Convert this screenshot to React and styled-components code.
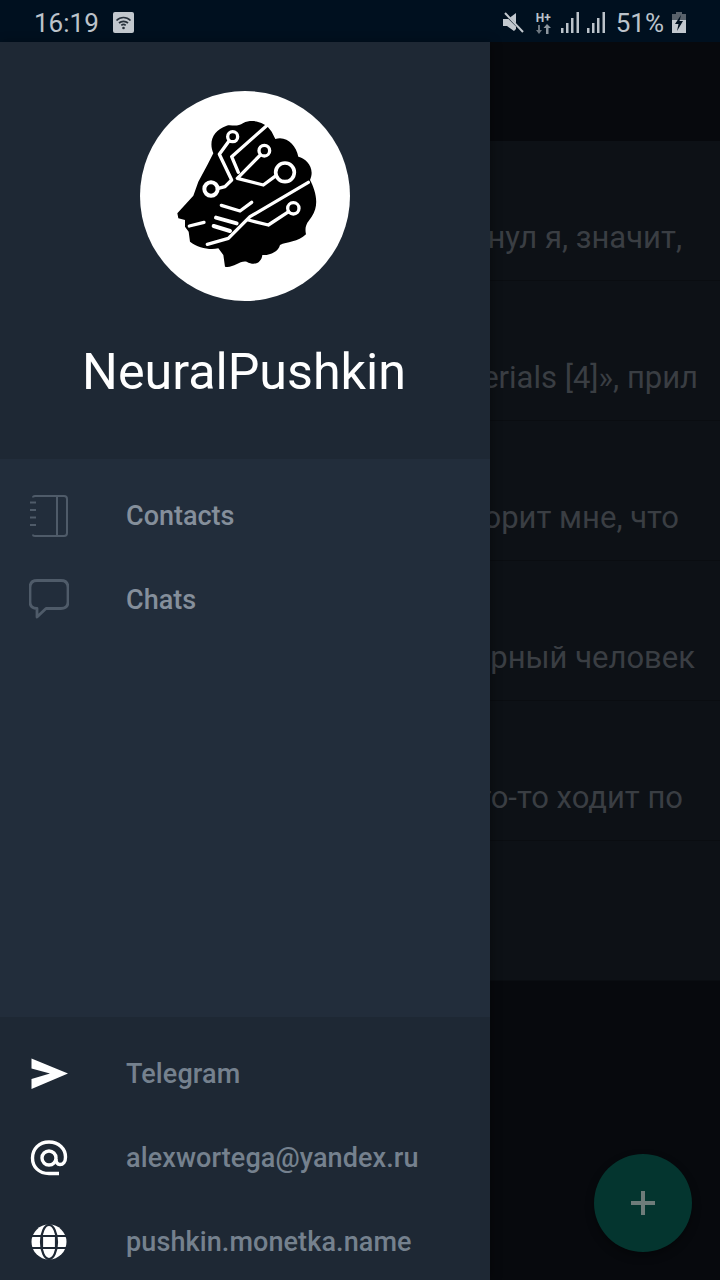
import React from "react"
import styled, { createGlobalStyle } from "styled-components"

const Global = createGlobalStyle`
  html, body {
    margin: 0;
    padding: 0;
    background: #07090d;
  }
  * {
    box-sizing: border-box;
  }
`

const Screen = styled.div`
  position: relative;
  width: 720px;
  height: 1280px;
  overflow: hidden;
  display: flex;
  flex-direction: column;
  background: #07090d;
  font-family: Roboto, "Noto Sans", sans-serif;
`

const StatusBar = styled.div`
  height: 42px;
  flex: none;
  display: flex;
  align-items: center;
  padding: 3px 34px 0 34px;
  background: #00101f;
  color: #bcc3ca;
  font-size: 26px;
  line-height: 36px;
`

const StatusRight = styled.div`
  margin-left: auto;
  display: flex;
  align-items: center;
`

const StatusIcon = styled.svg`
  display: block;
  flex: none;
  margin-left: ${(p) => p.$gap || 0}px;
`

const Network = styled.div`
  width: 15px;
  margin-left: 12px;
  display: flex;
  flex-direction: column;
  align-items: center;
`

const NetworkLabel = styled.span`
  font-size: 12px;
  line-height: 12px;
  font-weight: 700;
  color: #bcc3ca;
`

const Percent = styled.span`
  margin-left: 11px;
`

const Content = styled.div`
  flex: 1;
  display: flex;
  flex-direction: column;
`

const AppBar = styled.div`
  height: 99px;
  flex: none;
`

const Row = styled.div`
  height: 140px;
  flex: none;
  display: flex;
  align-items: flex-end;
  justify-content: flex-end;
  padding: 0 ${(p) => p.$right}px 22px 0;
  overflow: hidden;
  background: #0d1116;
  border-bottom: 1px solid #0a0d11;
  color: #3a3e43;
  font-size: 31px;
  line-height: 40px;
  white-space: nowrap;
`

const Fab = styled.div`
  position: absolute;
  left: 594px;
  top: 1154px;
  width: 98px;
  height: 98px;
  border-radius: 50%;
  display: flex;
  align-items: center;
  justify-content: center;
  background: #04352f;
  box-shadow: 0 4px 8px rgba(0, 0, 0, 0.35);
`

const Drawer = styled.aside`
  position: absolute;
  left: 0;
  top: 42px;
  bottom: 0;
  width: 490px;
  display: flex;
  flex-direction: column;
  background: #222d3b;
  box-shadow: 2px 0 10px rgba(0, 0, 0, 0.3);
`

const Profile = styled.header`
  height: 417px;
  flex: none;
  display: flex;
  flex-direction: column;
  align-items: center;
  padding-top: 49px;
  background: #1e2834;
`

const Avatar = styled.div`
  width: 210px;
  height: 210px;
  border-radius: 50%;
  background: #fff;
  overflow: hidden;
`

const Name = styled.h1`
  margin: 41px 2px 0 0;
  color: #fff;
  font-size: 50.2px;
  line-height: 60px;
  font-weight: 400;
`

const Nav = styled.nav`
  flex: 1;
  padding-top: 15px;
`

const Footer = styled.footer`
  height: 263px;
  flex: none;
  padding-top: 15px;
  overflow: hidden;
  background: #1e2834;
`

const Item = styled.div`
  height: 84px;
  display: flex;
  align-items: center;
  padding-left: 29px;
  color: ${(p) => (p.$muted ? "#75818e" : "#858f9b")};
  font-size: 27px;
  font-weight: 500;
  letter-spacing: ${(p) => (p.$muted ? "0.1px" : "0")};
`

const ItemIcon = styled.div`
  width: 97px;
  flex: none;
`

const Logo = () => (
  <svg viewBox="30 18 630 630" width="210" height="210">
    <path
      fill="#000"
      d="M142 385 L190 332 L205 290 L232 240 L250 205 C235 170 250 135 290 122 C305 118 320 128 340 114 C365 102 405 108 425 140 L436 162 C470 152 498 180 505 215 C530 220 556 250 540 285 C556 315 570 360 545 395 C535 410 522 420 528 448 C505 472 470 470 450 480 C445 500 420 512 397 510 C395 532 375 544 350 530 C330 525 310 550 285 545 L280 510 L265 490 C240 495 205 490 180 470 L176 440 L165 425 L165 405 L145 400 Z"
    />
    <g fill="none" stroke="#fff" strokeWidth="10" strokeLinecap="round" strokeLinejoin="round">
      <circle cx="308" cy="155" r="15" />
      <path d="M297 168 L268 208 L305 285 L285 305 L262 311" />
      <circle cx="243" cy="312" r="20" strokeWidth="12" />
      <path d="M410 122 L305 215 L325 262" />
      <circle cx="403" cy="197" r="16" />
      <path d="M391 210 L322 280 L400 300 L438 272" />
      <circle cx="465" cy="262" r="28" strokeWidth="11" />
      <path d="M535 292 L360 395 L295 460 L232 478" />
      <path d="M355 405 L415 420 L476 380" />
      <circle cx="490" cy="370" r="17" />
      <path d="M274 361 L330 378 L365 352" />
      <path d="M258 398 L320 415" strokeWidth="12" />
      <path d="M251 423 L300 438" strokeWidth="12" />
      <path d="M178 423 L222 412" />
    </g>
  </svg>
)

const ContactsIcon = () => (
  <svg width="40" height="44" viewBox="0 0 40 44" fill="none" stroke="#4f5b69" strokeWidth="2" style={{ display: "block" }}>
    <path d="M4 3.5 Q4 2 6 2 H35 Q38 2 38 5 V39 Q38 42 35 42 H6 Q4 42 4 40.5" />
    <path d="M28 2 V42" />
    <path d="M1 8.5 H7 M1 16 H7 M1 23.5 H7 M1 31 H7" />
  </svg>
)

const ChatIcon = () => (
  <svg width="40" height="42" viewBox="0 0 40 42" fill="none" stroke="#4f5b69" strokeWidth="2.8" style={{ display: "block" }}>
    <path strokeLinejoin="round" d="M8 1.5 H32 Q39 1.5 39 8.5 V23 Q39 29.5 32 29.5 H17 L8 38 L8 29.5 Q1 29.5 1 23 V8.5 Q1 1.5 8 1.5 Z" />
  </svg>
)

const SendIcon = () => (
  <svg width="40" height="32" viewBox="0 0 40 32" style={{ display: "block" }}>
    <path fill="#fff" d="M2.5 0.5 L39 15.5 L2.5 31 V21 L21 15.5 L2.5 10.5 Z" />
  </svg>
)

const AtIcon = () => (
  <svg width="40" height="36" viewBox="0 0 40 36" fill="none" stroke="#fff" strokeWidth="3.4" style={{ display: "block" }}>
    <path d="M30 33.5 H20 C10 33.5 3.5 27 3.5 18 C3.5 9 10 2 20 2 C30 2 36.5 9 36.5 17 C36.5 22 34 24.5 31 24.5 C28 24.5 27 22 27 19" />
    <circle cx="20" cy="18" r="7" />
  </svg>
)

const GlobeIcon = () => (
  <svg width="40" height="36" viewBox="0 0 40 36" style={{ display: "block" }}>
    <circle cx="20" cy="18" r="17.5" fill="#fff" />
    <g fill="none" stroke="#1e2834" strokeWidth="2.2">
      <ellipse cx="20" cy="18" rx="8" ry="17" />
      <path d="M3 12 H37 M3 24 H37" />
      <path d="M13 12 V24 M27 12 V24" />
    </g>
  </svg>
)

const chats = [
  { id: 1, text: "нул я, значит,", right: 38 },
  { id: 2, text: "Materials [4]», прил", right: 22 },
  { id: 3, text: "говорит мне, что", right: 41 },
  { id: 4, text: "рный человек", right: 25 },
  { id: 5, text: "Кто-то ходит по", right: 37 },
  { id: 6, text: "", right: 0 },
]

export default function App() {
  return (
    <Screen>
      <Global />
      <StatusBar>
        <span>16:19</span>
        <StatusIcon $gap={14} width="21" height="21" viewBox="0 0 21 21">
          <rect width="21" height="21" rx="2" fill="#c2c8ce" />
          <g fill="none" stroke="#26303a" strokeWidth="1.7">
            <path d="M3.5 8.5 C7.5 4.5 13.5 4.5 17.5 8.5" />
            <path d="M6 11 C8.5 8.7 12.5 8.7 15 11" />
            <path d="M8.3 13.3 C9.6 12.2 11.4 12.2 12.7 13.3" />
          </g>
          <circle cx="10.5" cy="16" r="1.3" fill="#26303a" />
        </StatusIcon>
        <StatusRight>
          <StatusIcon width="21" height="22" viewBox="0 0 21 22">
            <path fill="#c2c8ce" d="M0 7 H5 L13 1 V17 L11 19 L4 14 H0 Z" />
            <path stroke="#00101f" strokeWidth="2" d="M1 1 L21 21" />
            <path stroke="#c2c8ce" strokeWidth="2" d="M2 1 L20 20" />
          </StatusIcon>
          <Network>
            <NetworkLabel>H+</NetworkLabel>
            <svg width="15" height="10" viewBox="0 0 15 10" style={{ display: "block" }}>
              <path fill="#6d7780" d="M3 10 L0 6 H2 V1 H4 V6 H6 Z" />
              <path fill="#8d969e" d="M11 0 L15 4 H12.5 V10 H10 V4 H7.5 Z" />
            </svg>
          </Network>
          <StatusIcon $gap={10} width="18" height="21" viewBox="0 0 18 21">
            <path fill="#bcc3ca" d="M0 16 H2.5 V21 H0 Z M5 11 H7.5 V21 H5 Z M10 6 H12.5 V21 H10 Z M15.5 0 H18 V21 H15.5 Z" />
          </StatusIcon>
          <StatusIcon $gap={8} width="18" height="21" viewBox="0 0 18 21">
            <path fill="#bcc3ca" d="M0 16 H2.5 V21 H0 Z M5 11 H7.5 V21 H5 Z M10 6 H12.5 V21 H10 Z M15.5 0 H18 V21 H15.5 Z" />
          </StatusIcon>
          <Percent>51%</Percent>
          <StatusIcon $gap={8} width="14" height="21" viewBox="0 0 14 21">
            <path fill="#59626b" d="M4 0 H10 V2 H14 V8 H0 V2 H4 Z" />
            <path fill="#c2c8ce" d="M0 8 H14 V21 H0 Z" />
            <path fill="#00101f" d="M9 3 L3 12 H6.5 L5 19 L11 9 H7.5 Z" />
          </StatusIcon>
        </StatusRight>
      </StatusBar>

      <Content>
        <AppBar />
        {chats.map((chat) => (
          <Row key={chat.id} $right={chat.right}>
            {chat.text}
          </Row>
        ))}
      </Content>

      <Fab>
        <svg width="26" height="26" viewBox="0 0 26 26">
          <path fill="#6e7c7a" d="M11 1 H15 V11 H25 V15 H15 V25 H11 V15 H1 V11 H11 Z" />
        </svg>
      </Fab>

      <Drawer>
        <Profile>
          <Avatar>
            <Logo />
          </Avatar>
          <Name>NeuralPushkin</Name>
        </Profile>
        <Nav>
          <Item>
            <ItemIcon>
              <ContactsIcon />
            </ItemIcon>
            Contacts
          </Item>
          <Item>
            <ItemIcon>
              <ChatIcon />
            </ItemIcon>
            Chats
          </Item>
        </Nav>
        <Footer>
          <Item $muted>
            <ItemIcon>
              <SendIcon />
            </ItemIcon>
            Telegram
          </Item>
          <Item $muted>
            <ItemIcon>
              <AtIcon />
            </ItemIcon>
            alexwortega@yandex.ru
          </Item>
          <Item $muted>
            <ItemIcon>
              <GlobeIcon />
            </ItemIcon>
            pushkin.monetka.name
          </Item>
        </Footer>
      </Drawer>
    </Screen>
  )
}
